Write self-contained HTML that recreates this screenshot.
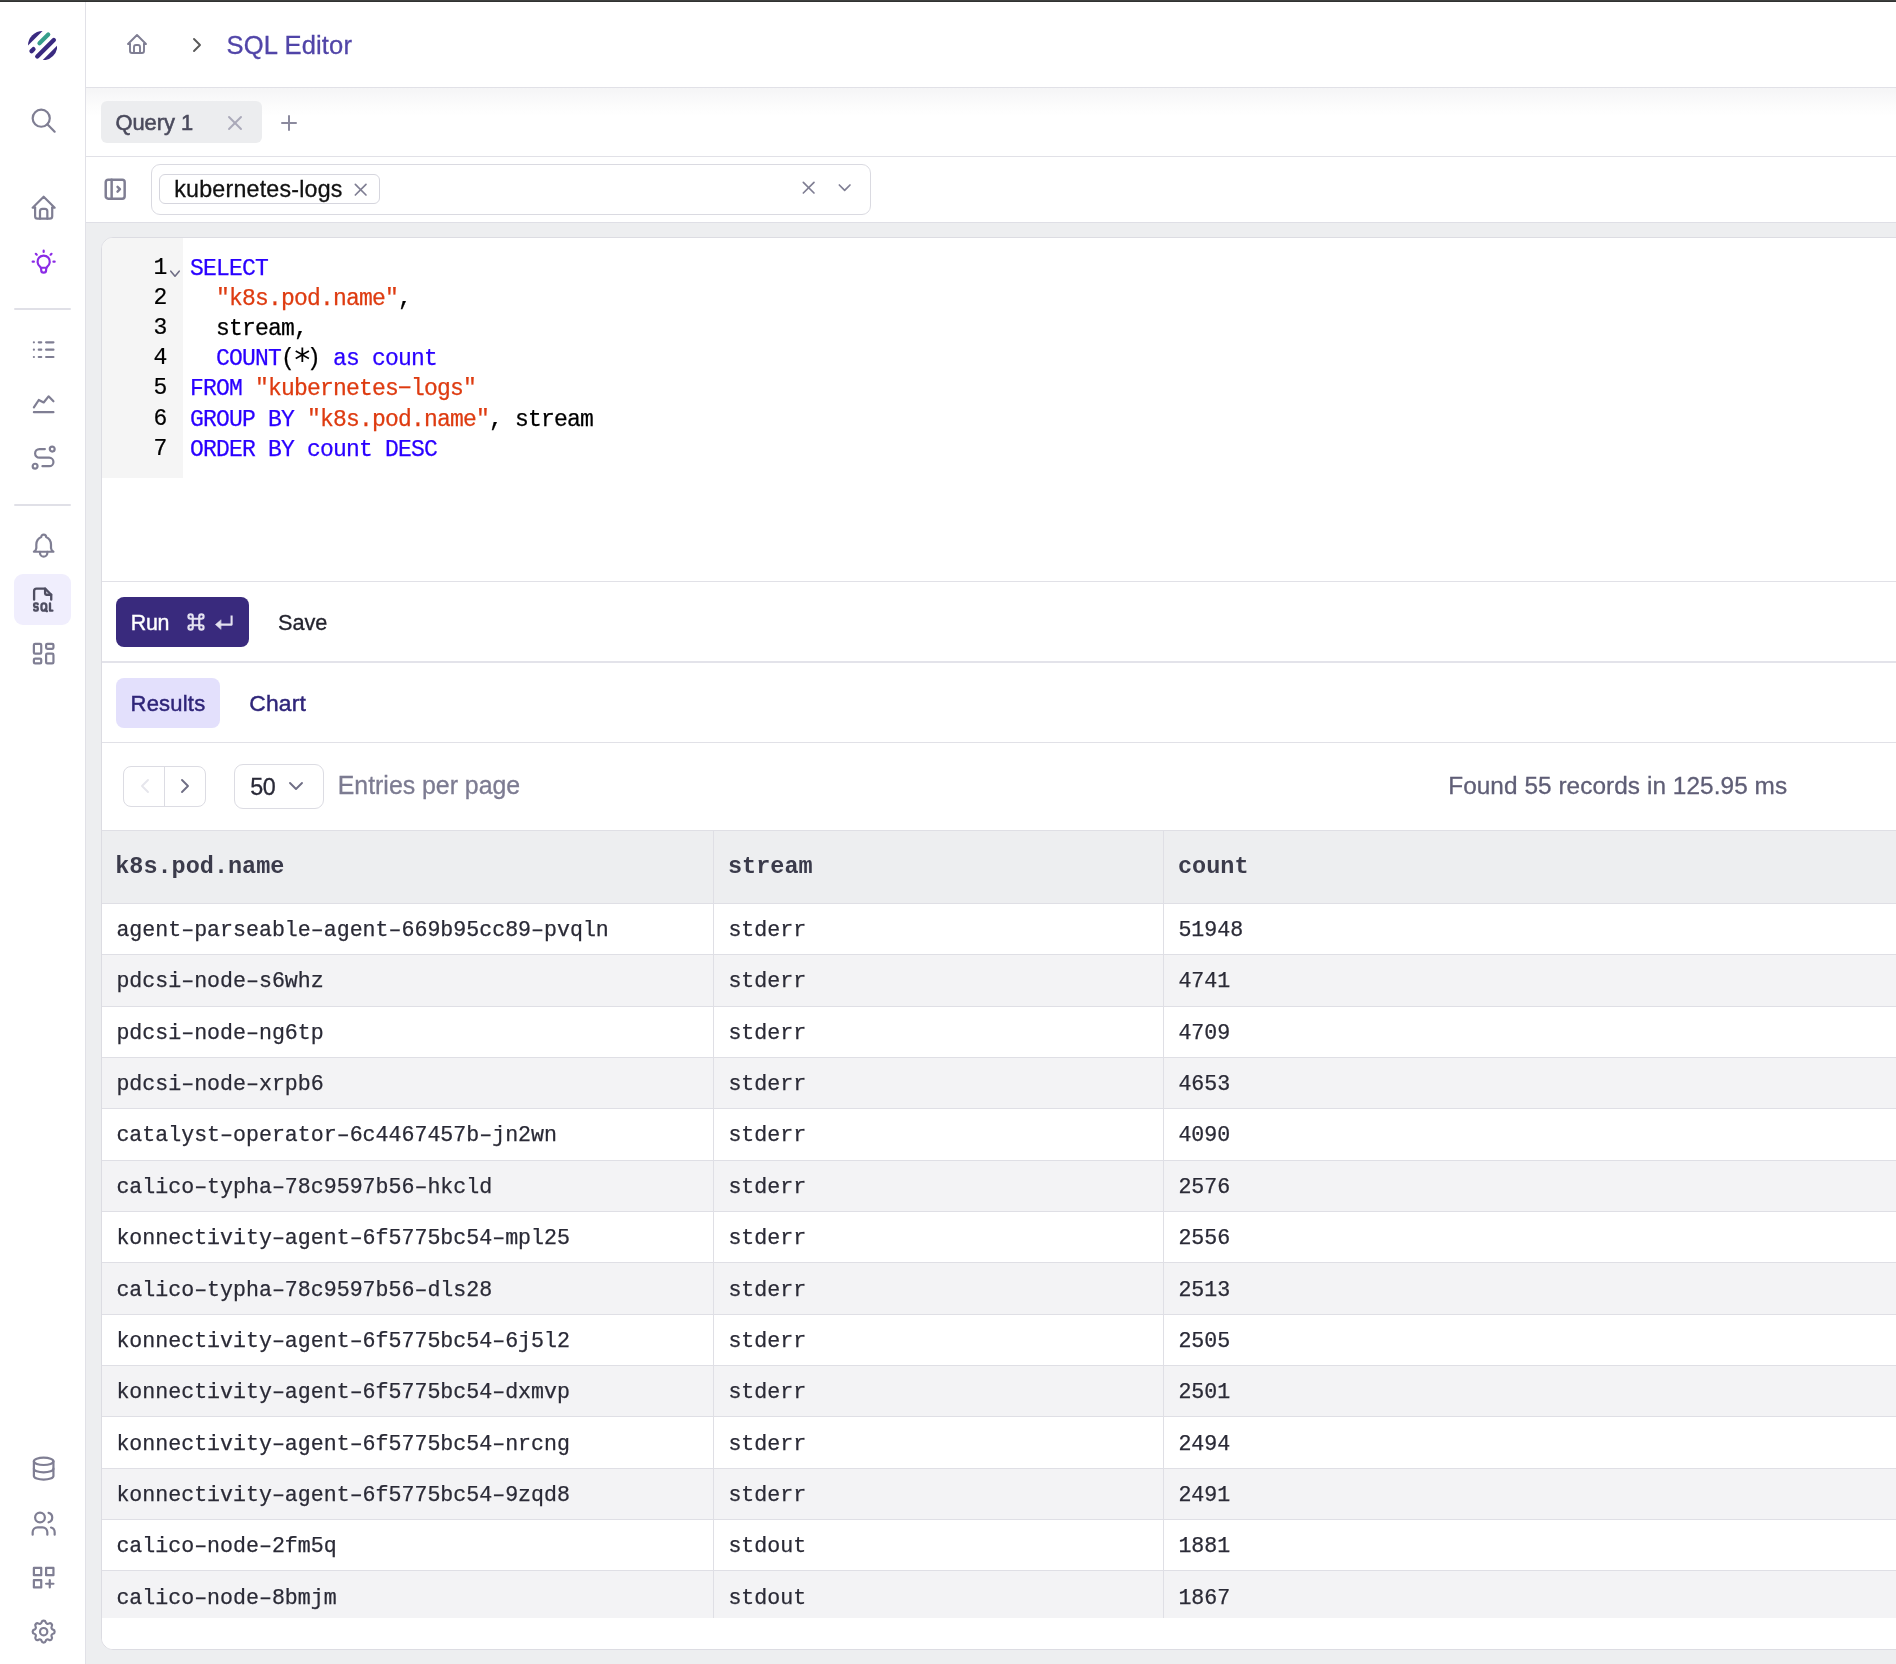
<!DOCTYPE html>
<html>
<head>
<meta charset="utf-8">
<title>SQL Editor</title>
<style>
*{box-sizing:border-box;margin:0;padding:0}
html,body{width:1896px;height:1664px;overflow:hidden;background:#fff}
body{position:relative;font-family:"Liberation Sans",sans-serif}
#root{position:absolute;left:0;top:0;width:1896px;height:1664px;will-change:transform}
.b{position:absolute}
.t{position:absolute;white-space:nowrap;line-height:1;font-family:"Liberation Sans",sans-serif}
.m{font-family:"Liberation Mono",monospace}
.i{position:absolute;fill:none;stroke-linecap:round;stroke-linejoin:round;overflow:visible}
</style>
</head>
<body>
<div id="root">
<div class="b" style="left:0px;top:0px;width:1896px;height:1px;background:#3e403f"></div>
<div class="b" style="left:0px;top:1px;width:1896px;height:1px;background:#303231"></div>
<div class="b" style="left:85px;top:2px;width:1px;height:1662px;background:#e1e1e7"></div>
<div class="b" style="left:86px;top:87px;width:1810px;height:1px;background:#e1e1e7"></div>
<div class="b" style="left:86px;top:88px;width:1810px;height:68px;background:linear-gradient(#f5f5f6,#f8f8f9 8px,#fcfcfc 18px,#fff 28px)"></div>
<div class="b" style="left:86px;top:156px;width:1810px;height:1px;background:#e1e1e7"></div>
<div class="b" style="left:86px;top:222px;width:1810px;height:1px;background:#dfdfe6"></div>
<div class="b" style="left:86px;top:223px;width:1810px;height:1441px;background:#edeef0"></div>
<div class="b" style="left:101px;top:237px;width:1810px;height:1413px;background:#fff;border:1px solid #dcdce2;border-radius:12px"></div>
<svg class="b" style="left:27.8px;top:30.75px;width:29.3px;height:29.3px" viewBox="-14.65 -14.65 29.3 29.3">
<defs><clipPath id="lc"><circle cx="0" cy="0" r="14.65"/></clipPath></defs>
<g clip-path="url(#lc)"><g transform="rotate(-45)">
<rect x="-16" y="-16" width="32" height="5.6" fill="#3a2a80"/>
<rect x="-16" y="10.25" width="32" height="6" fill="#3a2a80"/>
</g></g>
<g transform="rotate(-45)" stroke-linecap="round" fill="none">
<line x1="-0.5" y1="-4" x2="11.9" y2="-4" stroke="#369e8b" stroke-width="4.2"/>
<line x1="-11.7" y1="-4" x2="-9.0" y2="-4" stroke="#3a2a80" stroke-width="4.4"/>
<line x1="-11.5" y1="3.9" x2="11.9" y2="3.9" stroke="#3a2a80" stroke-width="4.4"/>
</g></svg>
<svg class="i" style="left:28.88px;top:105.69px;width:29.33px;height:29.33px;stroke:#7f7e93;stroke-width:1.8" viewBox="0 0 24 24" ><path d="M10 10m-7 0a7 7 0 1 0 14 0a7 7 0 1 0 -14 0"/><path d="M21 21l-6 -6"/></svg>
<svg class="i" style="left:28.54px;top:192.74px;width:29.33px;height:29.33px;stroke:#7f7e93;stroke-width:1.8" viewBox="0 0 24 24" ><path d="M5 12l-2 0l9 -9l9 9l-2 0"/><path d="M5 12v7a2 2 0 0 0 2 2h10a2 2 0 0 0 2 -2v-7"/><path d="M9 21v-6a2 2 0 0 1 2 -2h2a2 2 0 0 1 2 2v6"/></svg>
<svg class="i" style="left:28.54px;top:246.53px;width:29.33px;height:29.33px;stroke:#8b2be6;stroke-width:1.8" viewBox="0 0 24 24" ><path d="M3 12h1m8 -9v1m8 8h1m-15.4 -6.4l.7 .7m12.1 -.7l-.7 .7"/><path d="M9 16a5 5 0 1 1 6 0a3.5 3.5 0 0 0 -1 3a2 2 0 0 1 -4 0a3.5 3.5 0 0 0 -1 -3"/><path d="M9.7 17l4.6 0"/></svg>
<div class="b" style="left:14px;top:308px;width:57px;height:2px;background:#e0e0e7;border-radius:1px"></div>
<svg class="i" style="left:28.73px;top:334.83px;width:29.33px;height:29.33px;stroke:#7f7e93;stroke-width:1.8" viewBox="0 0 24 24" ><path d="M4 6h.01M8 6h2M14 6h6M4 12h.01M8 12h2M14 12h6M4 18h.01M8 18h2M14 18h6"/></svg>
<svg class="i" style="left:28.73px;top:389.33px;width:29.33px;height:29.33px;stroke:#7f7e93;stroke-width:1.8" viewBox="0 0 24 24" ><path d="M4 19l16 0"/><path d="M4 15l4 -6l4 2l4 -5l4 4"/></svg>
<svg class="i" style="left:28.73px;top:442.53px;width:29.33px;height:29.33px;stroke:#7f7e93;stroke-width:1.8" viewBox="0 0 24 24" ><path d="M3 19a2 2 0 1 0 4 0a2 2 0 0 0 -4 0"/><path d="M19 7a2 2 0 1 0 0 -4a2 2 0 0 0 0 4z"/><path d="M11 19h5.5a3.5 3.5 0 0 0 0 -7h-8a3.5 3.5 0 0 1 0 -7h4.5"/></svg>
<div class="b" style="left:14px;top:504px;width:57px;height:2px;background:#e0e0e7;border-radius:1px"></div>
<svg class="i" style="left:28.73px;top:530.54px;width:29.33px;height:29.33px;stroke:#7f7e93;stroke-width:1.8" viewBox="0 0 24 24" ><path d="M10 5a2 2 0 1 1 4 0a7 7 0 0 1 4 6v3a4 4 0 0 0 2 3h-16a4 4 0 0 0 2 -3v-3a7 7 0 0 1 4 -6"/><path d="M9 17v1a3 3 0 0 0 6 0v-1"/></svg>
<div class="b" style="left:14px;top:574px;width:57px;height:51px;background:#f0eefd;border-radius:9px"></div>
<svg class="i" style="left:28.48px;top:584.63px;width:29.33px;height:29.33px;stroke:#4f4e62;stroke-width:1.9" viewBox="0 0 24 24" ><path d="M14 3v4a1 1 0 0 0 1 1h4"/><path d="M5 12v-7a2 2 0 0 1 2 -2h7l5 5v4"/><path d="M5 20.25c0 .414 .336 .75 .75 .75h1.25a1 1 0 0 0 1 -1v-1a1 1 0 0 0 -1 -1h-1a1 1 0 0 1 -1 -1v-1a1 1 0 0 1 1 -1h1.25a.75 .75 0 0 1 .75 .75"/><path d="M18 15v6h2"/><path d="M13 15a2 2 0 0 1 2 2v2a2 2 0 1 1 -4 0v-2a2 2 0 0 1 2 -2z"/><path d="M14 20l1.5 1.5"/></svg>
<svg class="i" style="left:28.73px;top:638.94px;width:29.33px;height:29.33px;stroke:#7f7e93;stroke-width:1.8" viewBox="0 0 24 24" ><path d="M5 4h4a1 1 0 0 1 1 1v6a1 1 0 0 1 -1 1h-4a1 1 0 0 1 -1 -1v-6a1 1 0 0 1 1 -1"/><path d="M5 16h4a1 1 0 0 1 1 1v2a1 1 0 0 1 -1 1h-4a1 1 0 0 1 -1 -1v-2a1 1 0 0 1 1 -1"/><path d="M15 12h4a1 1 0 0 1 1 1v6a1 1 0 0 1 -1 1h-4a1 1 0 0 1 -1 -1v-6a1 1 0 0 1 1 -1"/><path d="M15 4h4a1 1 0 0 1 1 1v2a1 1 0 0 1 -1 1h-4a1 1 0 0 1 -1 -1v-2a1 1 0 0 1 1 -1"/></svg>
<svg class="i" style="left:28.73px;top:1454.34px;width:29.33px;height:29.33px;stroke:#7f7e93;stroke-width:1.8" viewBox="0 0 24 24" ><path d="M12 6m-8 0a8 3 0 1 0 16 0a8 3 0 1 0 -16 0"/><path d="M4 6v6a8 3 0 0 0 16 0v-6"/><path d="M4 12v6a8 3 0 0 0 16 0v-6"/></svg>
<svg class="i" style="left:28.73px;top:1508.63px;width:29.33px;height:29.33px;stroke:#7f7e93;stroke-width:1.8" viewBox="0 0 24 24" ><path d="M9 7m-4 0a4 4 0 1 0 8 0a4 4 0 1 0 -8 0"/><path d="M3 21v-2a4 4 0 0 1 4 -4h4a4 4 0 0 1 4 4v2"/><path d="M16 3.13a4 4 0 0 1 0 7.75"/><path d="M21 21v-2a4 4 0 0 0 -3 -3.85"/></svg>
<svg class="i" style="left:28.73px;top:1562.63px;width:29.33px;height:29.33px;stroke:#7f7e93;stroke-width:1.8" viewBox="0 0 24 24" ><path d="M4 4h6v6h-6zM14 4h6v6h-6zM4 14h6v6h-6zM14 17h6M17 14v6"/></svg>
<svg class="i" style="left:28.73px;top:1616.54px;width:29.33px;height:29.33px;stroke:#7f7e93;stroke-width:1.8" viewBox="0 0 24 24" ><path d="M10.325 4.317c.426 -1.756 2.924 -1.756 3.35 0a1.724 1.724 0 0 0 2.573 1.066c1.543 -.94 3.31 .826 2.37 2.37a1.724 1.724 0 0 0 1.065 2.572c1.756 .426 1.756 2.924 0 3.35a1.724 1.724 0 0 0 -1.066 2.573c.94 1.543 -.826 3.31 -2.37 2.37a1.724 1.724 0 0 0 -2.572 1.065c-.426 1.756 -2.924 1.756 -3.35 0a1.724 1.724 0 0 0 -2.573 -1.066c-1.543 .94 -3.31 -.826 -2.37 -2.37a1.724 1.724 0 0 0 -1.065 -2.572c-1.756 -.426 -1.756 -2.924 0 -3.35a1.724 1.724 0 0 0 1.066 -2.573c-.94 -1.543 .826 -3.31 2.37 -2.37c1 .608 2.296 .07 2.572 -1.065z"/><path d="M9 12a3 3 0 1 0 6 0a3 3 0 0 0 -6 0"/></svg>
<svg class="i" style="left:124.50px;top:32.35px;width:24px;height:24px;stroke:#7f7e93;stroke-width:1.9" viewBox="0 0 24 24" ><path d="M5 12l-2 0l9 -9l9 9l-2 0"/><path d="M5 12v7a2 2 0 0 0 2 2h10a2 2 0 0 0 2 -2v-7"/><path d="M9 21v-6a2 2 0 0 1 2 -2h2a2 2 0 0 1 2 2v6"/></svg>
<svg class="i" style="left:184.50px;top:32.60px;width:24px;height:24px;stroke:#595959;stroke-width:1.9" viewBox="0 0 24 24" ><path d="M9 6l6 6l-6 6"/></svg>
<div class="t" style="left:226.60px;top:33.00px;font-size:25.55px;color:#5145a8;letter-spacing:0.15px;-webkit-text-stroke:0.3px;">SQL Editor</div>
<div class="b" style="left:101px;top:101px;width:161px;height:42px;background:#ecedef;border-radius:6px"></div>
<div class="t" style="left:115.40px;top:112.00px;font-size:21.9px;color:#4a4a5c;-webkit-text-stroke:0.55px #4a4a5c;">Query 1</div>
<svg class="i" style="left:222.80px;top:110.50px;width:24px;height:24px;stroke:#aaa9b9;stroke-width:1.9" viewBox="0 0 24 24" ><path d="M18 6l-12 12"/><path d="M6 6l12 12"/></svg>
<svg class="i" style="left:276.60px;top:110.50px;width:24px;height:24px;stroke:#8b8a9e;stroke-width:2" viewBox="0 0 24 24" ><path d="M12 5l0 14"/><path d="M5 12l14 0"/></svg>
<svg class="i" style="left:101.25px;top:174.90px;width:28.4px;height:28.4px;stroke:#7f7e93;stroke-width:2.1" viewBox="0 0 24 24" ><path d="M4 6a2 2 0 0 1 2 -2h12a2 2 0 0 1 2 2v12a2 2 0 0 1 -2 2h-12a2 2 0 0 1 -2 -2z"/><path d="M9 4v16"/><path d="M14 10l2 2l-2 2"/></svg>
<div class="b" style="left:151px;top:164px;width:720px;height:51px;background:#fff;border:1px solid #dadae1;border-radius:9px"></div>
<div class="b" style="left:159px;top:174px;width:221px;height:30px;background:#fff;border:1px solid #d6d6de;border-radius:6px"></div>
<div class="t" style="left:174.30px;top:178.00px;font-size:23.2px;color:#111;letter-spacing:0.22px;-webkit-text-stroke:0.3px;">kubernetes-logs</div>
<svg class="i" style="left:350.33px;top:179.34px;width:21.33px;height:21.33px;stroke:#7f7e93;stroke-width:1.9" viewBox="0 0 24 24" ><path d="M18 6l-12 12"/><path d="M6 6l12 12"/></svg>
<svg class="i" style="left:798.04px;top:177.34px;width:21.33px;height:21.33px;stroke:#7f7e93;stroke-width:1.9" viewBox="0 0 24 24" ><path d="M18 6l-12 12"/><path d="M6 6l12 12"/></svg>
<svg class="i" style="left:834.13px;top:177.34px;width:21.33px;height:21.33px;stroke:#7f7e93;stroke-width:1.9" viewBox="0 0 24 24" ><path d="M6 9l6 6l6 -6"/></svg>
<div class="b" style="left:102px;top:238px;width:81px;height:240px;background:#f5f5f5;border-top-left-radius:11px"></div>
<div class="t m" style="left:190.00px;top:258.00px;font-size:23.0px;color:#000;letter-spacing:-0.802px;-webkit-text-stroke:0.25px;"><span style="color:#2a00ff">SELECT</span></div>
<div class="t m" style="left:153.60px;top:257.00px;font-size:23.0px;color:#000;letter-spacing:-0.802px;-webkit-text-stroke:0.2px;">1</div>
<div class="t m" style="left:190.00px;top:288.00px;font-size:23.0px;color:#000;letter-spacing:-0.802px;-webkit-text-stroke:0.25px;"><span style="color:#000">&nbsp;&nbsp;</span><span style="color:#de3b10">"k8s.pod.name"</span><span style="color:#000">,</span></div>
<div class="t m" style="left:153.60px;top:287.00px;font-size:23.0px;color:#000;letter-spacing:-0.802px;-webkit-text-stroke:0.2px;">2</div>
<div class="t m" style="left:190.00px;top:318.00px;font-size:23.0px;color:#000;letter-spacing:-0.802px;-webkit-text-stroke:0.25px;"><span style="color:#000">&nbsp;&nbsp;stream,</span></div>
<div class="t m" style="left:153.60px;top:317.00px;font-size:23.0px;color:#000;letter-spacing:-0.802px;-webkit-text-stroke:0.2px;">3</div>
<div class="t m" style="left:190.00px;top:348.00px;font-size:23.0px;color:#000;letter-spacing:-0.802px;-webkit-text-stroke:0.25px;"><span style="color:#000">&nbsp;&nbsp;</span><span style="color:#2a00ff">COUNT</span><span style="color:#000">(&nbsp;)&nbsp;</span><span style="color:#2a00ff">as</span><span style="color:#000">&nbsp;</span><span style="color:#2a00ff">count</span></div>
<div class="t m" style="left:153.60px;top:347.00px;font-size:23.0px;color:#000;letter-spacing:-0.802px;-webkit-text-stroke:0.2px;">4</div>
<div class="t m" style="left:190.00px;top:378.00px;font-size:23.0px;color:#000;letter-spacing:-0.802px;-webkit-text-stroke:0.25px;"><span style="color:#2a00ff">FROM</span><span style="color:#000">&nbsp;</span><span style="color:#de3b10">"kubernetes−logs"</span></div>
<div class="t m" style="left:153.60px;top:377.00px;font-size:23.0px;color:#000;letter-spacing:-0.802px;-webkit-text-stroke:0.2px;">5</div>
<div class="t m" style="left:190.00px;top:409.00px;font-size:23.0px;color:#000;letter-spacing:-0.802px;-webkit-text-stroke:0.25px;"><span style="color:#2a00ff">GROUP&nbsp;BY</span><span style="color:#000">&nbsp;</span><span style="color:#de3b10">"k8s.pod.name"</span><span style="color:#000">,&nbsp;stream</span></div>
<div class="t m" style="left:153.60px;top:408.00px;font-size:23.0px;color:#000;letter-spacing:-0.802px;-webkit-text-stroke:0.2px;">6</div>
<div class="t m" style="left:190.00px;top:439.00px;font-size:23.0px;color:#000;letter-spacing:-0.802px;-webkit-text-stroke:0.25px;"><span style="color:#2a00ff">ORDER&nbsp;BY</span><span style="color:#000">&nbsp;</span><span style="color:#2a00ff">count</span><span style="color:#000">&nbsp;</span><span style="color:#2a00ff">DESC</span></div>
<div class="t m" style="left:153.60px;top:438.00px;font-size:23.0px;color:#000;letter-spacing:-0.802px;-webkit-text-stroke:0.2px;">7</div>
<div class="t m" style="left:292.60px;top:341.00px;font-size:32px;color:#000;">∗</div>
<svg class="i" style="left:168px;top:266px;width:14px;height:14px;stroke:#6f6e85;stroke-width:1.6" viewBox="0 0 14 14"><path d="M2.8 5.2L7 10.2L11.2 5.2"/></svg>
<div class="b" style="left:102px;top:581px;width:1794px;height:1px;background:#e1e1e7"></div>
<div class="b" style="left:116px;top:597px;width:133px;height:50px;background:#392a7d;border-radius:8px"></div>
<div class="t" style="left:130.80px;top:613.00px;font-size:21.4px;color:#fff;letter-spacing:-0.35px;-webkit-text-stroke:0.4px #fff;">Run</div>
<svg class="i" style="left:182.50px;top:609.30px;width:26px;height:26px;stroke:#e3e1f0;stroke-width:2" viewBox="0 0 24 24" ><path d="M7 9a2 2 0 1 1 2 -2v10a2 2 0 1 1 -2 -2h10a2 2 0 1 1 -2 2v-10a2 2 0 1 1 2 2h-10"/></svg>
<svg class="i" style="left:213px;top:612px;width:22px;height:20px;stroke:#e3e1f0;stroke-width:2.1" viewBox="0 0 22 20"><path d="M18.6 3.4v9.2H6" stroke-linecap="butt"/><path d="M7.8 8L2.4 12.6L7.8 17.2z" fill="#e3e1f0" stroke-width="0.5"/></svg>
<div class="t" style="left:277.90px;top:612.00px;font-size:21.72px;color:#24242e;-webkit-text-stroke:0.3px;">Save</div>
<div class="b" style="left:102px;top:661px;width:1794px;height:2px;background:#e3e3ea"></div>
<div class="b" style="left:116px;top:678px;width:104px;height:50px;background:#e3e0fc;border-radius:8px"></div>
<div class="t" style="left:130.60px;top:693.00px;font-size:22.0px;color:#2f2579;letter-spacing:0.2px;-webkit-text-stroke:0.45px #2f2579;">Results</div>
<div class="t" style="left:249.20px;top:692.00px;font-size:22.8px;color:#2f2579;letter-spacing:0.25px;-webkit-text-stroke:0.45px #2f2579;">Chart</div>
<div class="b" style="left:102px;top:742px;width:1794px;height:1px;background:#e1e1e7"></div>
<div class="b" style="left:123px;top:766px;width:83px;height:41px;background:#fff;border:1px solid #dcdce3;border-radius:8px"></div>
<div class="b" style="left:164px;top:767px;width:1px;height:39px;background:#dcdce3"></div>
<svg class="i" style="left:132.60px;top:774.20px;width:24px;height:24px;stroke:#e6e6ec;stroke-width:1.9" viewBox="0 0 24 24" ><path d="M15 6l-6 6l6 6"/></svg>
<svg class="i" style="left:172.80px;top:774.20px;width:24px;height:24px;stroke:#6f6e85;stroke-width:1.9" viewBox="0 0 24 24" ><path d="M9 6l6 6l-6 6"/></svg>
<div class="b" style="left:234px;top:764px;width:90px;height:45px;background:#fff;border:1px solid #dcdce3;border-radius:9px"></div>
<div class="t" style="left:250.20px;top:776.00px;font-size:23.3px;color:#2a2a38;letter-spacing:-0.45px;-webkit-text-stroke:0.3px;">50</div>
<svg class="i" style="left:283.60px;top:774.30px;width:24px;height:24px;stroke:#6f6e85;stroke-width:1.9" viewBox="0 0 24 24" ><path d="M6 9l6 6l6 -6"/></svg>
<div class="t" style="left:337.80px;top:774.00px;font-size:24.85px;color:#7c7b91;-webkit-text-stroke:0.3px;">Entries per page</div>
<div class="t" style="left:1448.20px;top:774.00px;font-size:24.35px;color:#5f5e76;letter-spacing:0.07px;-webkit-text-stroke:0.3px;">Found 55 records in 125.95 ms</div>
<div class="b" style="left:102px;top:830px;width:1794px;height:74px;background:#edeef0"></div>
<div class="b" style="left:102px;top:830px;width:1794px;height:1px;background:#dfdfe5"></div>
<div class="b" style="left:102px;top:903px;width:1794px;height:1px;background:#dfdfe5"></div>
<div class="t m" style="left:115.20px;top:855.00px;font-size:23.5px;color:#3b3b4b;font-weight:700;">k8s.pod.name</div>
<div class="t m" style="left:728.00px;top:855.00px;font-size:23.5px;color:#3b3b4b;font-weight:700;">stream</div>
<div class="t m" style="left:1178.00px;top:855.00px;font-size:23.5px;color:#3b3b4b;font-weight:700;">count</div>
<div class="b" style="left:102px;top:954px;width:1794px;height:1px;background:#dfdfe5"></div>
<div class="t m" style="left:116.40px;top:920.00px;font-size:21.6px;color:#2a2a36;-webkit-text-stroke:0.25px #2a2a36;">agent–parseable–agent–669b95cc89–pvqln</div>
<div class="t m" style="left:728.40px;top:920.00px;font-size:21.6px;color:#2a2a36;-webkit-text-stroke:0.25px #2a2a36;">stderr</div>
<div class="t m" style="left:1178.40px;top:920.00px;font-size:21.6px;color:#2a2a36;-webkit-text-stroke:0.25px #2a2a36;">51948</div>
<div class="b" style="left:102px;top:955px;width:1794px;height:52px;background:#f3f3f5"></div>
<div class="b" style="left:102px;top:1006px;width:1794px;height:1px;background:#dfdfe5"></div>
<div class="t m" style="left:116.40px;top:971.00px;font-size:21.6px;color:#2a2a36;-webkit-text-stroke:0.25px #2a2a36;">pdcsi–node–s6whz</div>
<div class="t m" style="left:728.40px;top:971.00px;font-size:21.6px;color:#2a2a36;-webkit-text-stroke:0.25px #2a2a36;">stderr</div>
<div class="t m" style="left:1178.40px;top:971.00px;font-size:21.6px;color:#2a2a36;-webkit-text-stroke:0.25px #2a2a36;">4741</div>
<div class="b" style="left:102px;top:1057px;width:1794px;height:1px;background:#dfdfe5"></div>
<div class="t m" style="left:116.40px;top:1023.00px;font-size:21.6px;color:#2a2a36;-webkit-text-stroke:0.25px #2a2a36;">pdcsi–node–ng6tp</div>
<div class="t m" style="left:728.40px;top:1023.00px;font-size:21.6px;color:#2a2a36;-webkit-text-stroke:0.25px #2a2a36;">stderr</div>
<div class="t m" style="left:1178.40px;top:1023.00px;font-size:21.6px;color:#2a2a36;-webkit-text-stroke:0.25px #2a2a36;">4709</div>
<div class="b" style="left:102px;top:1058px;width:1794px;height:51px;background:#f3f3f5"></div>
<div class="b" style="left:102px;top:1108px;width:1794px;height:1px;background:#dfdfe5"></div>
<div class="t m" style="left:116.40px;top:1074.00px;font-size:21.6px;color:#2a2a36;-webkit-text-stroke:0.25px #2a2a36;">pdcsi–node–xrpb6</div>
<div class="t m" style="left:728.40px;top:1074.00px;font-size:21.6px;color:#2a2a36;-webkit-text-stroke:0.25px #2a2a36;">stderr</div>
<div class="t m" style="left:1178.40px;top:1074.00px;font-size:21.6px;color:#2a2a36;-webkit-text-stroke:0.25px #2a2a36;">4653</div>
<div class="b" style="left:102px;top:1160px;width:1794px;height:1px;background:#dfdfe5"></div>
<div class="t m" style="left:116.40px;top:1125.00px;font-size:21.6px;color:#2a2a36;-webkit-text-stroke:0.25px #2a2a36;">catalyst–operator–6c4467457b–jn2wn</div>
<div class="t m" style="left:728.40px;top:1125.00px;font-size:21.6px;color:#2a2a36;-webkit-text-stroke:0.25px #2a2a36;">stderr</div>
<div class="t m" style="left:1178.40px;top:1125.00px;font-size:21.6px;color:#2a2a36;-webkit-text-stroke:0.25px #2a2a36;">4090</div>
<div class="b" style="left:102px;top:1161px;width:1794px;height:51px;background:#f3f3f5"></div>
<div class="b" style="left:102px;top:1211px;width:1794px;height:1px;background:#dfdfe5"></div>
<div class="t m" style="left:116.40px;top:1177.00px;font-size:21.6px;color:#2a2a36;-webkit-text-stroke:0.25px #2a2a36;">calico–typha–78c9597b56–hkcld</div>
<div class="t m" style="left:728.40px;top:1177.00px;font-size:21.6px;color:#2a2a36;-webkit-text-stroke:0.25px #2a2a36;">stderr</div>
<div class="t m" style="left:1178.40px;top:1177.00px;font-size:21.6px;color:#2a2a36;-webkit-text-stroke:0.25px #2a2a36;">2576</div>
<div class="b" style="left:102px;top:1262px;width:1794px;height:1px;background:#dfdfe5"></div>
<div class="t m" style="left:116.40px;top:1228.00px;font-size:21.6px;color:#2a2a36;-webkit-text-stroke:0.25px #2a2a36;">konnectivity–agent–6f5775bc54–mpl25</div>
<div class="t m" style="left:728.40px;top:1228.00px;font-size:21.6px;color:#2a2a36;-webkit-text-stroke:0.25px #2a2a36;">stderr</div>
<div class="t m" style="left:1178.40px;top:1228.00px;font-size:21.6px;color:#2a2a36;-webkit-text-stroke:0.25px #2a2a36;">2556</div>
<div class="b" style="left:102px;top:1263px;width:1794px;height:52px;background:#f3f3f5"></div>
<div class="b" style="left:102px;top:1314px;width:1794px;height:1px;background:#dfdfe5"></div>
<div class="t m" style="left:116.40px;top:1280.00px;font-size:21.6px;color:#2a2a36;-webkit-text-stroke:0.25px #2a2a36;">calico–typha–78c9597b56–dls28</div>
<div class="t m" style="left:728.40px;top:1280.00px;font-size:21.6px;color:#2a2a36;-webkit-text-stroke:0.25px #2a2a36;">stderr</div>
<div class="t m" style="left:1178.40px;top:1280.00px;font-size:21.6px;color:#2a2a36;-webkit-text-stroke:0.25px #2a2a36;">2513</div>
<div class="b" style="left:102px;top:1365px;width:1794px;height:1px;background:#dfdfe5"></div>
<div class="t m" style="left:116.40px;top:1331.00px;font-size:21.6px;color:#2a2a36;-webkit-text-stroke:0.25px #2a2a36;">konnectivity–agent–6f5775bc54–6j5l2</div>
<div class="t m" style="left:728.40px;top:1331.00px;font-size:21.6px;color:#2a2a36;-webkit-text-stroke:0.25px #2a2a36;">stderr</div>
<div class="t m" style="left:1178.40px;top:1331.00px;font-size:21.6px;color:#2a2a36;-webkit-text-stroke:0.25px #2a2a36;">2505</div>
<div class="b" style="left:102px;top:1366px;width:1794px;height:51px;background:#f3f3f5"></div>
<div class="b" style="left:102px;top:1416px;width:1794px;height:1px;background:#dfdfe5"></div>
<div class="t m" style="left:116.40px;top:1382.00px;font-size:21.6px;color:#2a2a36;-webkit-text-stroke:0.25px #2a2a36;">konnectivity–agent–6f5775bc54–dxmvp</div>
<div class="t m" style="left:728.40px;top:1382.00px;font-size:21.6px;color:#2a2a36;-webkit-text-stroke:0.25px #2a2a36;">stderr</div>
<div class="t m" style="left:1178.40px;top:1382.00px;font-size:21.6px;color:#2a2a36;-webkit-text-stroke:0.25px #2a2a36;">2501</div>
<div class="b" style="left:102px;top:1468px;width:1794px;height:1px;background:#dfdfe5"></div>
<div class="t m" style="left:116.40px;top:1434.00px;font-size:21.6px;color:#2a2a36;-webkit-text-stroke:0.25px #2a2a36;">konnectivity–agent–6f5775bc54–nrcng</div>
<div class="t m" style="left:728.40px;top:1434.00px;font-size:21.6px;color:#2a2a36;-webkit-text-stroke:0.25px #2a2a36;">stderr</div>
<div class="t m" style="left:1178.40px;top:1434.00px;font-size:21.6px;color:#2a2a36;-webkit-text-stroke:0.25px #2a2a36;">2494</div>
<div class="b" style="left:102px;top:1469px;width:1794px;height:51px;background:#f3f3f5"></div>
<div class="b" style="left:102px;top:1519px;width:1794px;height:1px;background:#dfdfe5"></div>
<div class="t m" style="left:116.40px;top:1485.00px;font-size:21.6px;color:#2a2a36;-webkit-text-stroke:0.25px #2a2a36;">konnectivity–agent–6f5775bc54–9zqd8</div>
<div class="t m" style="left:728.40px;top:1485.00px;font-size:21.6px;color:#2a2a36;-webkit-text-stroke:0.25px #2a2a36;">stderr</div>
<div class="t m" style="left:1178.40px;top:1485.00px;font-size:21.6px;color:#2a2a36;-webkit-text-stroke:0.25px #2a2a36;">2491</div>
<div class="b" style="left:102px;top:1570px;width:1794px;height:1px;background:#dfdfe5"></div>
<div class="t m" style="left:116.40px;top:1536.00px;font-size:21.6px;color:#2a2a36;-webkit-text-stroke:0.25px #2a2a36;">calico–node–2fm5q</div>
<div class="t m" style="left:728.40px;top:1536.00px;font-size:21.6px;color:#2a2a36;-webkit-text-stroke:0.25px #2a2a36;">stdout</div>
<div class="t m" style="left:1178.40px;top:1536.00px;font-size:21.6px;color:#2a2a36;-webkit-text-stroke:0.25px #2a2a36;">1881</div>
<div class="b" style="left:102px;top:1571px;width:1794px;height:52px;background:#f3f3f5"></div>
<div class="t m" style="left:116.40px;top:1588.00px;font-size:21.6px;color:#2a2a36;-webkit-text-stroke:0.25px #2a2a36;">calico–node–8bmjm</div>
<div class="t m" style="left:728.40px;top:1588.00px;font-size:21.6px;color:#2a2a36;-webkit-text-stroke:0.25px #2a2a36;">stdout</div>
<div class="t m" style="left:1178.40px;top:1588.00px;font-size:21.6px;color:#2a2a36;-webkit-text-stroke:0.25px #2a2a36;">1867</div>
<div class="b" style="left:713px;top:830px;width:1px;height:788px;background:#dfdfe5"></div>
<div class="b" style="left:1163px;top:830px;width:1px;height:788px;background:#dfdfe5"></div>
<div class="b" style="left:102px;top:1618px;width:1794px;height:31px;background:#fff;border-bottom-left-radius:11px"></div>
</div>
</body>
</html>
